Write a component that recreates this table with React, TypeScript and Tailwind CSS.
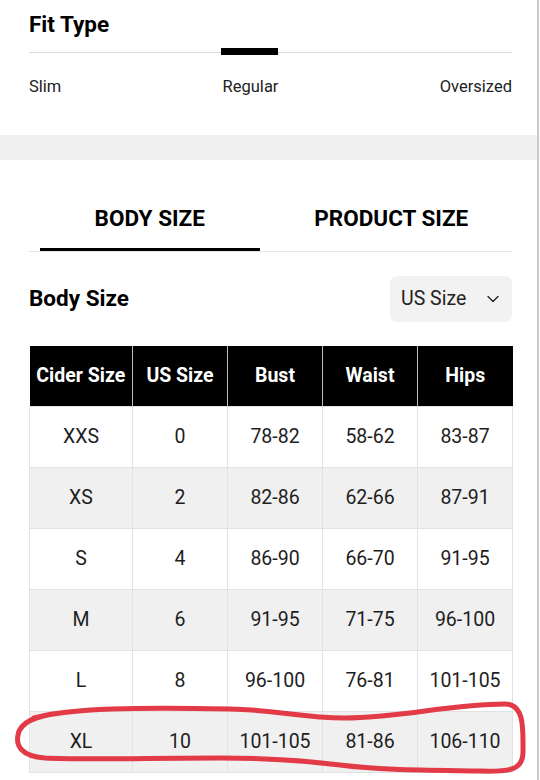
import React, { useState } from 'react'
import { ChevronDown } from 'lucide-react'

interface SizeRow {
    cider: string
    us: string
    bust: string
    waist: string
    hips: string
}

const rows: SizeRow[] = [
    { cider: 'XXS', us: '0', bust: '78-82', waist: '58-62', hips: '83-87' },
    { cider: 'XS', us: '2', bust: '82-86', waist: '62-66', hips: '87-91' },
    { cider: 'S', us: '4', bust: '86-90', waist: '66-70', hips: '91-95' },
    { cider: 'M', us: '6', bust: '91-95', waist: '71-75', hips: '96-100' },
    { cider: 'L', us: '8', bust: '96-100', waist: '76-81', hips: '101-105' },
    { cider: 'XL', us: '10', bust: '101-105', waist: '81-86', hips: '106-110' },
]

const headers = ['Cider Size', 'US Size', 'Bust', 'Waist', 'Hips']

const App: React.FC = () => {
    const [tab, setTab] = useState<'body' | 'product'>('body')

    return (
        <div className="relative w-[539px] min-h-[780px] bg-white border-r-2 border-[#c9c9c9] font-['Roboto',sans-serif] text-[#1a1a1a]">
            {/* Fit Type */}
            <div className="h-[135px] pl-[29px] pr-[25px] pt-[10px]">
                <h2 className="text-[22.5px] leading-[28px] font-bold text-black">Fit Type</h2>
                <div className="relative mt-[10px] h-[8px]">
                    <div className="absolute left-0 right-0 top-[4px] h-px bg-[#dcdcdc]" />
                    <div className="absolute left-[192px] top-0 w-[57px] h-[7px] bg-black" />
                </div>
                <div className="mt-[21px] flex justify-between text-[16.5px] leading-[20px] text-[#222]">
                    <span>Slim</span>
                    <span>Regular</span>
                    <span>Oversized</span>
                </div>
            </div>

            <div className="h-[25px] bg-[#f0f0f0]" />

            {/* Size tabs */}
            <div className="pl-[29px] pr-[25px] pt-[30px]">
                <div className="flex border-b border-[#e6e6e6]">
                    <button
                        onClick={() => setTab('body')}
                        className="flex-1 flex flex-col"
                    >
                        <span className="h-[58px] flex items-center justify-center text-[22.5px] font-bold text-black">
                            BODY SIZE
                        </span>
                        <span className={`mx-[11px] h-[3px] ${tab === 'body' ? 'bg-black' : 'bg-transparent'}`} />
                    </button>
                    <button
                        onClick={() => setTab('product')}
                        className="flex-1 flex flex-col"
                    >
                        <span className="h-[58px] flex items-center justify-center text-[22.5px] font-bold text-black">
                            PRODUCT SIZE
                        </span>
                        <span className={`mx-[11px] h-[3px] ${tab === 'product' ? 'bg-black' : 'bg-transparent'}`} />
                    </button>
                </div>

                <div className="mt-[24px] h-[46px] flex items-center justify-between">
                    <h3 className="text-[22.5px] font-bold text-black">Body Size</h3>
                    <div className="w-[122px] h-[46px] rounded-[7px] bg-[#f2f2f2] flex items-center justify-between pl-[11px] pr-[9px]">
                        <span className="text-[19.5px] text-[#222]">US Size</span>
                        <ChevronDown size={20} strokeWidth={1.6} className="text-[#222]" />
                    </div>
                </div>

                {/* Table */}
                <table className="mt-[24px] w-[483px] table-fixed border-collapse text-center">
                    <colgroup>
                        <col className="w-[103px]" />
                        <col className="w-[95px]" />
                        <col className="w-[95px]" />
                        <col className="w-[95px]" />
                        <col className="w-[95px]" />
                    </colgroup>
                    <thead>
                        <tr className="h-[60px] bg-black">
                            {headers.map((h) => (
                                <th
                                    key={h}
                                    className="border-x border-[#bdbdbd] first:border-l-0 last:border-r-0 text-[19.5px] font-bold text-white whitespace-nowrap p-0"
                                >
                                    {h}
                                </th>
                            ))}
                        </tr>
                    </thead>
                    <tbody>
                        {rows.map((r, i) => (
                            <tr
                                key={r.cider}
                                className={`h-[61px] text-[19.5px] text-[#1e1e1e] ${i % 2 === 1 ? 'bg-[#f0f0f0]' : 'bg-white'}`}
                            >
                                <td className="border border-[#e2e2e2]">{r.cider}</td>
                                <td className="border border-[#e2e2e2]">{r.us}</td>
                                <td className="border border-[#e2e2e2]">{r.bust}</td>
                                <td className="border border-[#e2e2e2]">{r.waist}</td>
                                <td className="border border-[#e2e2e2]">{r.hips}</td>
                            </tr>
                        ))}
                    </tbody>
                </table>
            </div>

            {/* hand-drawn highlight around XL row */}
            <svg
                className="absolute left-0 top-0 pointer-events-none"
                width="540"
                height="780"
                viewBox="0 0 540 780"
                fill="none"
            >
                <path
                    d="M 34 718 C 70 708, 140 707, 230 709 C 280 710, 300 718, 345 718 C 400 718, 450 704, 505 704 C 525 704, 523 730, 523 752 C 523 770, 510 772, 480 771 C 420 770, 380 770, 340 765 C 300 760, 270 758, 220 758 C 150 758, 80 760, 45 758 C 20 756, 16 745, 18 735 C 20 722, 35 716, 60 713"
                    stroke="#e23b47"
                    strokeWidth="5"
                    strokeLinecap="round"
                    strokeLinejoin="round"
                />
            </svg>
        </div>
    )
}

export default App
